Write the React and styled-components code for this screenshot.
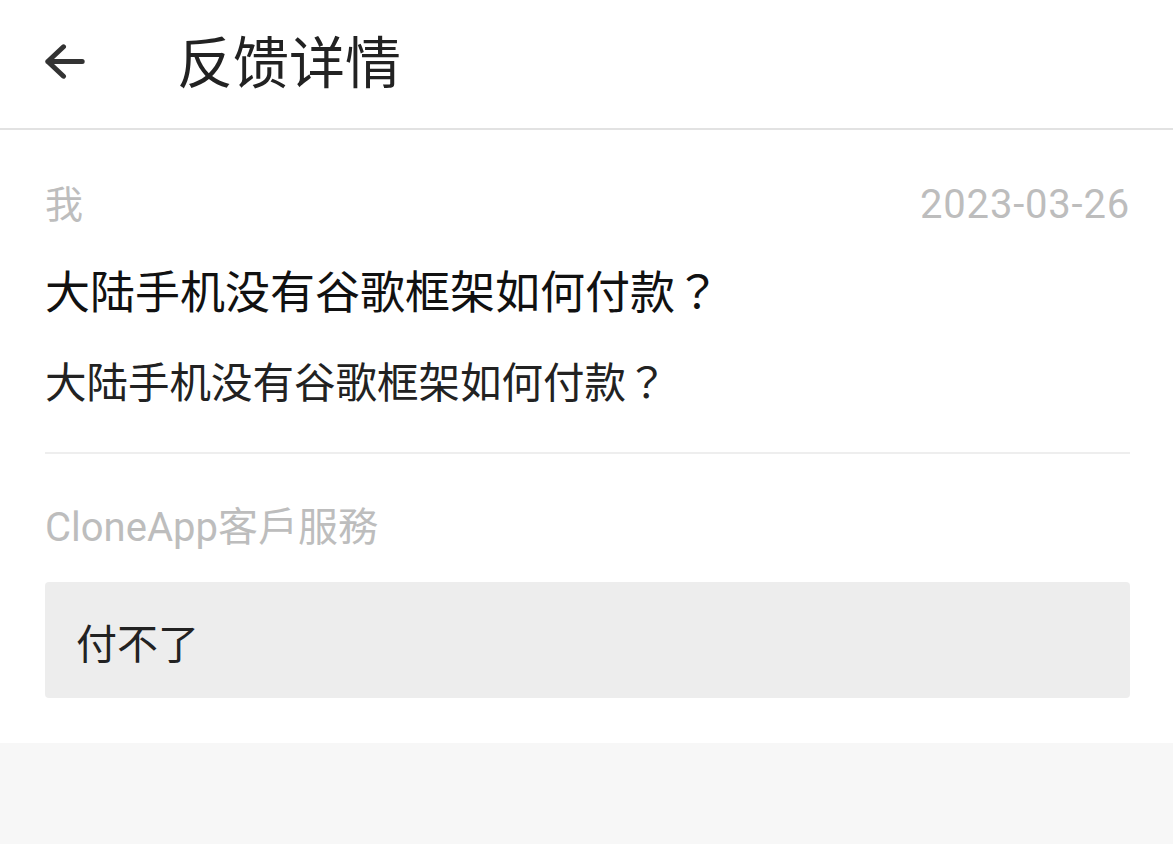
import React from 'react'
import styled, { createGlobalStyle } from 'styled-components'

const GlobalStyle = createGlobalStyle`
  html, body {
    margin: 0;
    padding: 0;
    background: #f7f7f7;
  }
  body {
    font-family: Roboto, "Noto Sans CJK SC", sans-serif;
    -webkit-font-smoothing: antialiased;
  }
`

const feedback = {
  author: '我',
  date: '2023-03-26',
  title: '大陆手机没有谷歌框架如何付款',
  body: '大陆手机没有谷歌框架如何付款',
  replier: 'CloneApp客戶服務',
  reply: '付不了',
}

const BackArrow = () => (
  <svg width="40" height="35" viewBox="0 0 40 35" fill="none">
    <path
      d="M2.8 17.5H37.2M18.5 2.8L2.8 17.5L18.5 32.2"
      stroke="#333"
      strokeWidth="5"
      strokeLinecap="round"
      strokeLinejoin="round"
    />
  </svg>
)

const App = () => {
  return (
    <Page>
      <GlobalStyle />
      <Header>
        <BackButton aria-label="back">
          <BackArrow />
        </BackButton>
        <Title>反馈详情</Title>
      </Header>
      <Content>
        <MetaRow>
          <Meta>{feedback.author}</Meta>
          <Meta $spacing="0.8px">{feedback.date}</Meta>
        </MetaRow>
        <Question>{feedback.title}<Punct>？</Punct></Question>
        <Body>{feedback.body}<Punct>？</Punct></Body>
        <Divider />
        <Meta $size="40px">{feedback.replier}</Meta>
        <ReplyBox>{feedback.reply}</ReplyBox>
      </Content>
    </Page>
  )
}

const Page = styled.div`
  min-height: 844px;
  background: #f7f7f7;
`

const Header = styled.header`
  height: 128px;
  display: flex;
  align-items: center;
  padding-left: 45px;
  background: #fff;
  border-bottom: 2px solid #e2e2e2;
`

const BackButton = styled.div`
  width: 40px;
  height: 35px;
  display: flex;
  margin-top: -6px;
  svg {
    display: block;
  }
`

const Title = styled.h1`
  margin: -11px 0 0 92px;
  font-family: "Noto Sans CJK SC", sans-serif;
  font-size: 56px;
  font-weight: 400;
  color: #222;
  line-height: 1;
`

const Content = styled.main`
  background: #fff;
  padding: 50px 43px 45px 45px;
`

const MetaRow = styled.div`
  display: flex;
  justify-content: space-between;
  align-items: center;
`

const Meta = styled.div`
  font-size: ${p => p.$size || (p.$spacing ? '40px' : '38px')};
  letter-spacing: ${p => p.$spacing || '0'};
  line-height: 50px;
  color: #bdbdbd;
`

const Question = styled.div`
  margin-top: 30px;
  font-family: "Noto Sans CJK SC", sans-serif;
  font-size: 45px;
  line-height: 60px;
  color: #111;
`

const Body = styled.div`
  margin-top: 30px;
  font-family: "Noto Sans CJK SC", sans-serif;
  font-size: 41.5px;
  line-height: 60px;
  color: #222;
`

const Punct = styled.span`
  font-family: "Noto Sans CJK TC", sans-serif;
`

const Divider = styled.div`
  height: 2px;
  background: #eeeeee;
  margin: 42px 0 49px;
`

const ReplyBox = styled.div`
  margin-top: 29px;
  height: 116px;
  display: flex;
  align-items: center;
  padding: 2px 31px 0;
  box-sizing: border-box;
  background: #ededed;
  border-radius: 4px;
  font-family: "Noto Sans CJK SC", sans-serif;
  font-size: 41px;
  color: #222;
`

export default App
